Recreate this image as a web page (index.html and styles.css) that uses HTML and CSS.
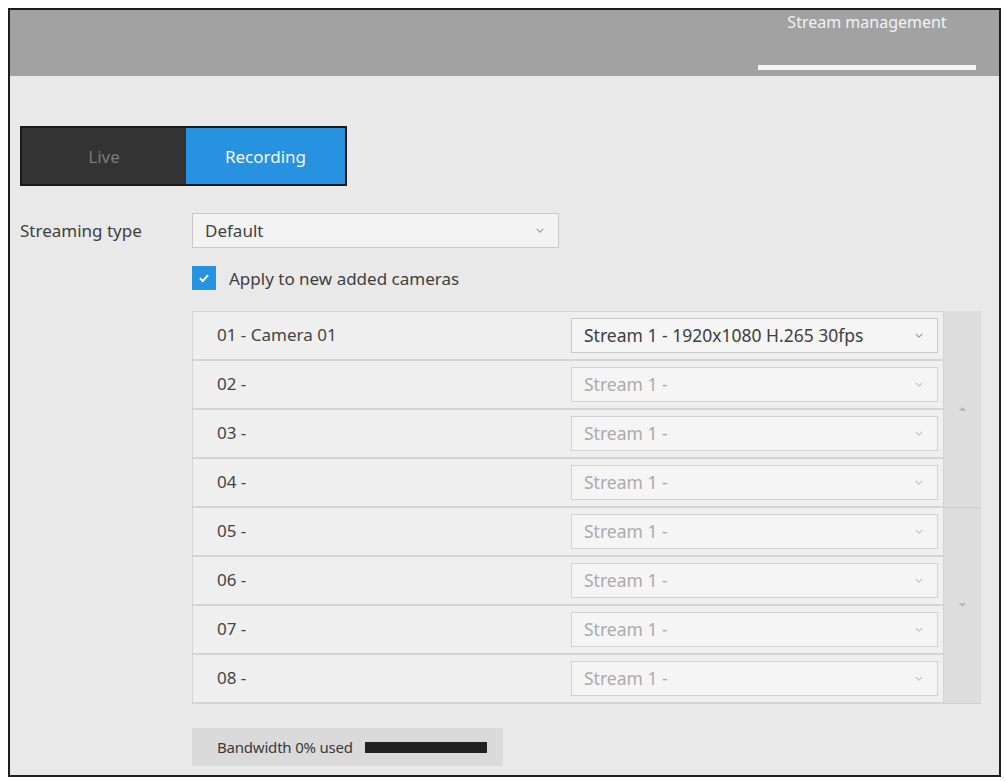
FILE: index.html
```html
<!DOCTYPE html>
<html lang="en">
<head>
    <meta charset="UTF-8" />
    <title>Stream management</title>
    <link rel="stylesheet" href="styles.css">
</head>
<body>
    <div class="frame">
        <header class="topbar">
            <div class="tab">
                <span>Stream management</span>
                <div class="tab-line"></div>
            </div>
        </header>

        <main class="content">
            <div class="switch">
                <div class="switch-item">Live</div>
                <div class="switch-item active">Recording</div>
            </div>

            <div class="field">
                <label class="field-label">Streaming type</label>
                <div class="select wide">
                    <span>Default</span>
                    <svg class="chev" viewBox="0 0 10 6"><path d="M1 1l4 4 4-4" /></svg>
                </div>
            </div>

            <div class="check-row">
                <span class="checkbox">
                    <svg viewBox="0 0 12 12"><path d="M2.5 6.2l2.4 2.4 4.6-5" /></svg>
                </span>
                <span>Apply to new added cameras</span>
            </div>

            <div class="cam-table">
                <div class="rows" id="rows"></div>
                <div class="scroller">
                    <div class="scroll-btn">
                        <svg viewBox="0 0 10 6"><path d="M1 5l4-4 4 4z" /></svg>
                    </div>
                    <div class="scroll-btn">
                        <svg viewBox="0 0 10 6"><path d="M1 1l4 4 4-4z" /></svg>
                    </div>
                </div>
            </div>

            <div class="bandwidth">
                <span>Bandwidth 0% used</span>
                <div class="bw-bar"></div>
            </div>
        </main>
    </div>

    <script>
        const rows = document.getElementById('rows');
        const cams = [
            { name: '01 - Camera 01', stream: 'Stream 1 - 1920x1080 H.265 30fps', on: true },
            { name: '02 -', stream: 'Stream 1 -' },
            { name: '03 -', stream: 'Stream 1 -' },
            { name: '04 -', stream: 'Stream 1 -' },
            { name: '05 -', stream: 'Stream 1 -' },
            { name: '06 -', stream: 'Stream 1 -' },
            { name: '07 -', stream: 'Stream 1 -' },
            { name: '08 -', stream: 'Stream 1 -' }
        ];

        cams.forEach(cam => {
            const row = document.createElement('div');
            row.classList.add('row');
            row.innerHTML = `
                <span class="cam-name">${cam.name}</span>
                <div class="select stream ${cam.on ? '' : 'disabled'}">
                    <span>${cam.stream}</span>
                    <svg class="chev" viewBox="0 0 10 6"><path d="M1 1l4 4 4-4" /></svg>
                </div>
            `;
            rows.appendChild(row);
        });
    </script>
</body>
</html>
```

FILE: styles.css
```css
body {
    margin: 0;
    background: #fff;
    font-family: 'Noto Sans', 'Open Sans', sans-serif;
    color: #444;
}

.frame {
    margin: 8px 0 0 8px;
    width: 989px;
    height: 765px;
    border: 2px solid #1e1e1e;
    background: #e9e9e9;
    display: flex;
    flex-direction: column;
}

.topbar {
    height: 66px;
    background: #a2a2a2;
    display: flex;
    justify-content: flex-end;
}

.tab {
    width: 218px;
    margin-right: 23px;
    display: flex;
    flex-direction: column;
    align-items: center;
}

.tab span {
    color: #f2f2f2;
    font-size: 16px;
    margin-top: 1px;
}

.tab-line {
    margin-top: auto;
    margin-bottom: 6px;
    width: 100%;
    height: 5px;
    background: #f4f4f4;
}

.content {
    padding: 50px 0 0 10px;
}

.switch {
    display: flex;
    width: 323px;
    height: 56px;
    border: 2px solid #1a1a1a;
    background: #333;
}

.switch-item {
    width: 164px;
    display: flex;
    align-items: center;
    justify-content: center;
    color: #7a7a7a;
    font-size: 17px;
}

.switch-item.active {
    flex: 1;
    background: #2692e0;
    color: #f4f8fc;
}

.field {
    display: flex;
    align-items: center;
    margin-top: 27px;
}

.field-label {
    width: 172px;
    font-size: 17px;
    color: #404040;
}

.select {
    box-sizing: border-box;
    height: 35px;
    border: 1px solid #c9c9c9;
    background: #f3f3f3;
    display: flex;
    align-items: center;
    justify-content: space-between;
    padding: 0 14px 1px 12px;
    font-size: 17px;
    color: #404040;
}

.select.wide {
    width: 367px;
}

.chev {
    width: 8px;
    height: 5px;
    fill: none;
    stroke: #9a9a9a;
    stroke-width: 1.5;
}

.check-row {
    display: flex;
    align-items: center;
    margin: 18px 0 0 172px;
    font-size: 17px;
    color: #404040;
}

.checkbox {
    width: 24px;
    height: 24px;
    background: #2692e0;
    margin-right: 13px;
    display: flex;
    align-items: center;
    justify-content: center;
}

.checkbox svg {
    width: 14px;
    height: 14px;
    fill: none;
    stroke: #fff;
    stroke-width: 1.6;
}

.cam-table {
    display: flex;
    margin: 21px 0 0 172px;
    width: 789px;
}

.rows {
    width: 752px;
    border-top: 1px solid #d4d4d4;
}

.row {
    box-sizing: border-box;
    height: 49px;
    display: flex;
    align-items: center;
    justify-content: space-between;
    padding: 0 5px 0 24px;
    background: #efefef;
    border: 1px solid #d4d4d4;
    border-top: none;
    border-bottom: 2px solid #d4d4d4;
}

.cam-name {
    font-size: 17px;
    color: #444;
    margin-bottom: 3px;
}

.select.stream {
    width: 367px;
    background: #f5f5f5;
    font-size: 17.5px;
}

.select.disabled {
    color: #ababab;
    border-color: #d2d2d2;
}

.select.disabled .chev {
    stroke: #c4c4c4;
}

.scroller {
    width: 37px;
    display: flex;
    flex-direction: column;
    background: #dddddd;
}

.scroll-btn {
    flex: 1;
    display: flex;
    align-items: center;
    justify-content: center;
    border-bottom: 1px solid #cfcfcf;
}

.scroll-btn svg {
    width: 9px;
    height: 6px;
    fill: #b3b3b3;
}

.bandwidth {
    box-sizing: border-box;
    margin: 24px 0 0 172px;
    width: 311px;
    height: 38px;
    background: #dadada;
    display: flex;
    align-items: center;
    padding-left: 25px;
    font-size: 15px;
    letter-spacing: -0.2px;
    color: #3a3a3a;
}

.bw-bar {
    width: 122px;
    height: 11px;
    background: #222;
    margin-left: 12px;
}
```
